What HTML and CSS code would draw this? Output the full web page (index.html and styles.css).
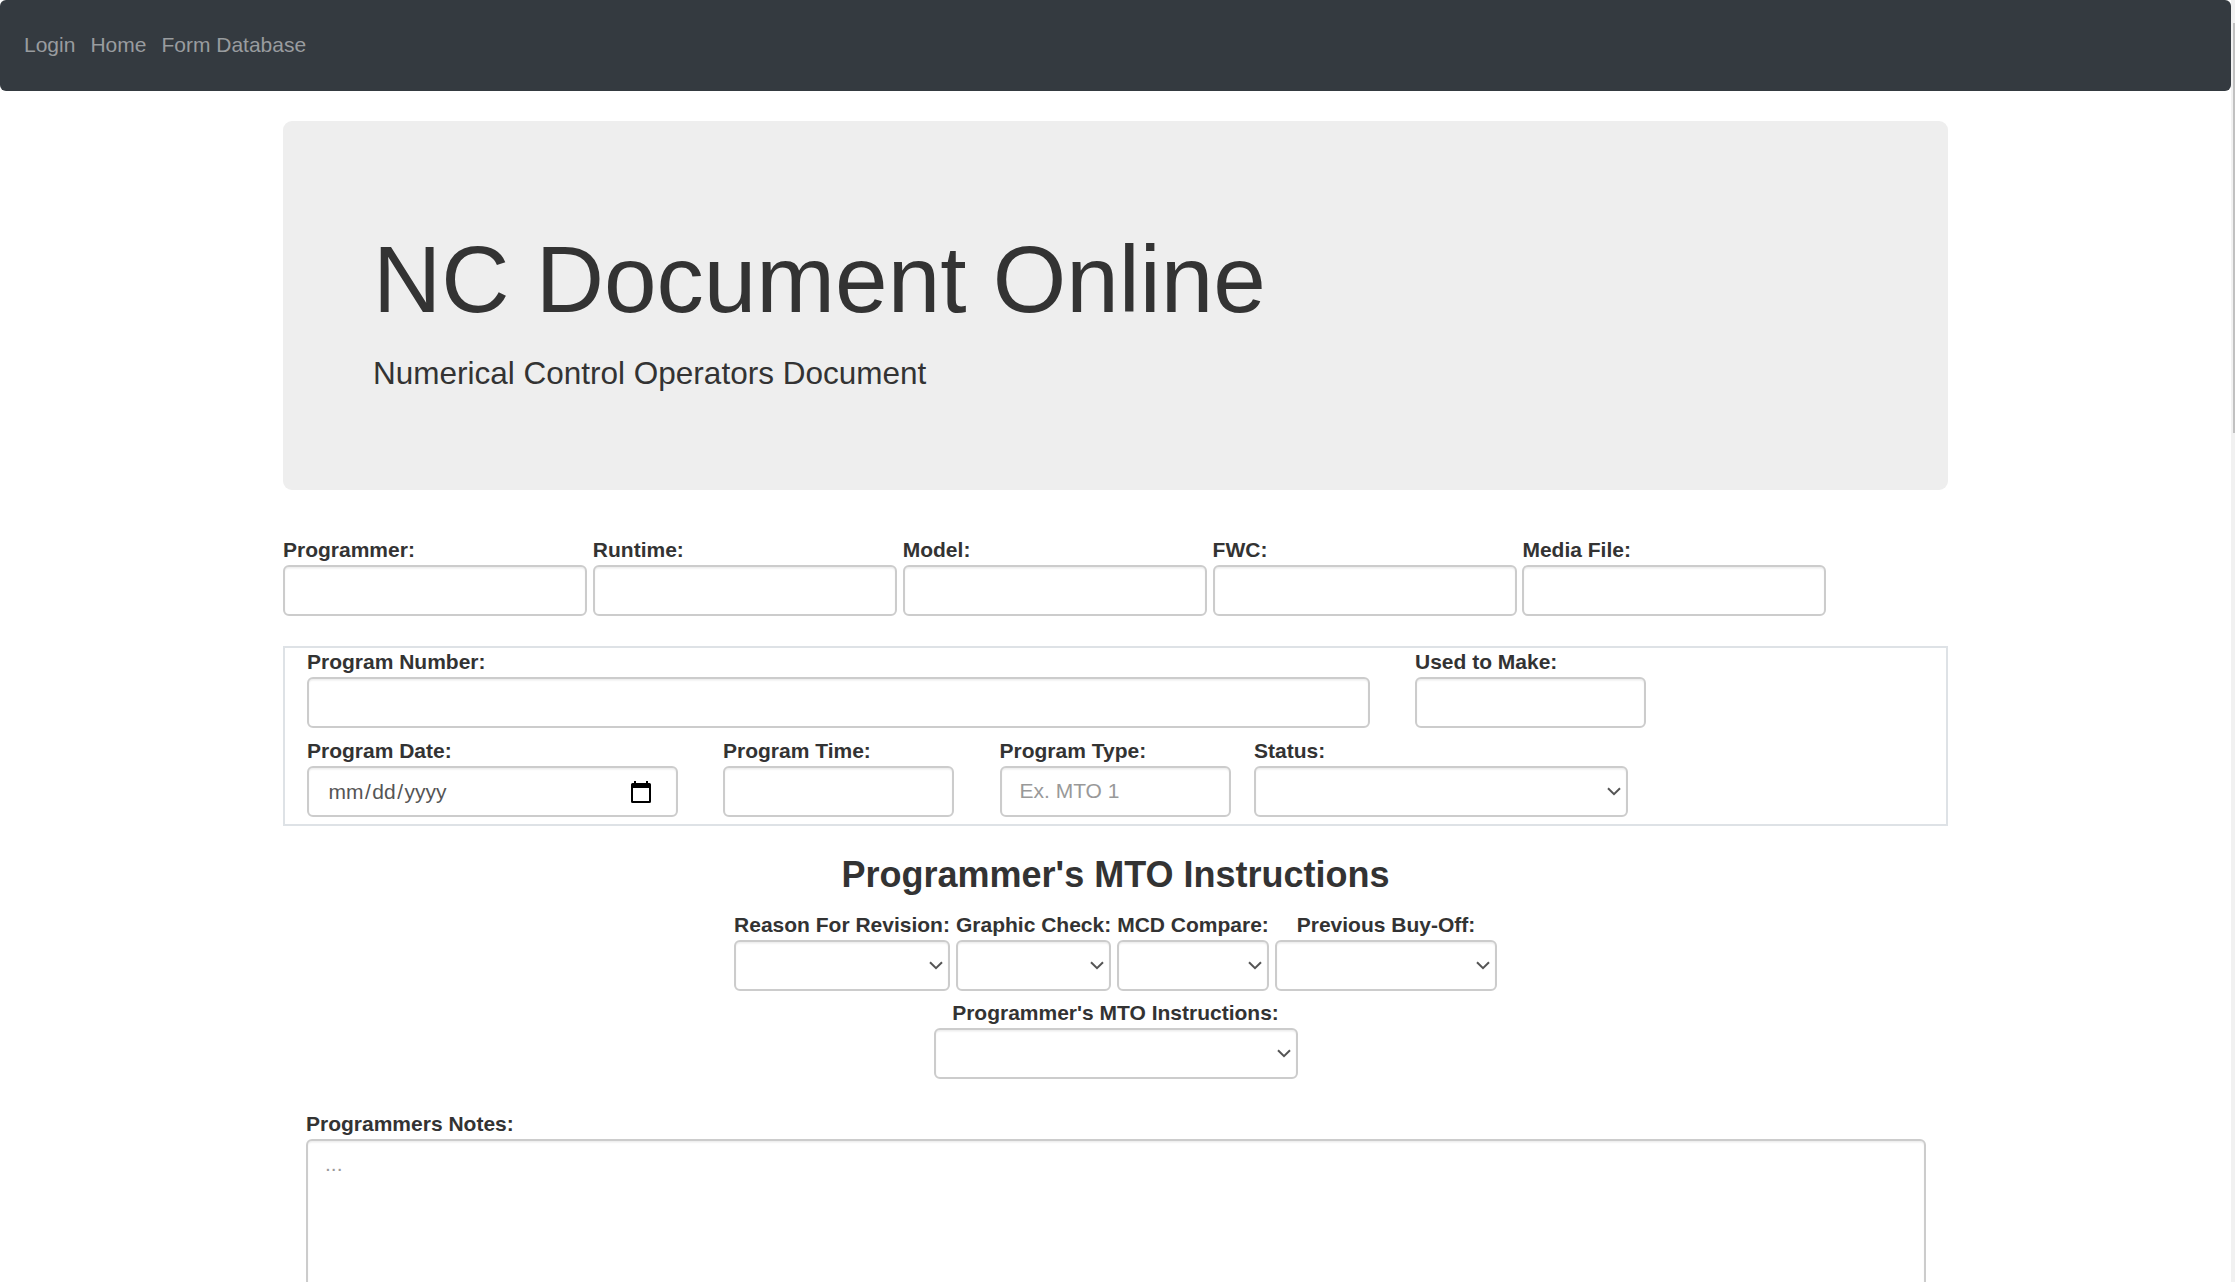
FILE: index.html
```html
<!DOCTYPE html>
<html lang="en">
<head>
<meta charset="utf-8">
<title>NC Document Online</title>
<link rel="stylesheet" href="styles.css">
</head>
<body>
<svg class="defs" aria-hidden="true">
  <symbol id="chevron" viewBox="0 0 14 9"><path d="M1 1.2 7 7.2 13 1.2" fill="none" stroke="#555" stroke-width="2"/></symbol>
</svg>
<div class="page">
  <nav class="navbar">
    <a href="#">Login</a>
    <a href="#">Home</a>
    <a href="#">Form Database</a>
  </nav>
  <main class="container">
    <header class="jumbotron">
      <h1>NC Document Online</h1>
      <p>Numerical Control Operators Document</p>
    </header>

    <div class="row general">
      <label class="field">Programmer:<input class="control" type="text"></label>
      <label class="field">Runtime:<input class="control" type="text"></label>
      <label class="field">Model:<input class="control" type="text"></label>
      <label class="field">FWC:<input class="control" type="text"></label>
      <label class="field">Media File:<input class="control" type="text"></label>
    </div>

    <section class="program">
      <div class="row">
        <label class="field number">Program Number:<input class="control" type="text"></label>
        <label class="field short">Used to Make:<input class="control" type="text"></label>
      </div>
      <div class="row">
        <div class="field date">Program Date:
          <div class="control picker">
            <span class="date-text"><span>mm</span>/<span>dd</span>/<span>yyyy</span></span>
            <svg class="calendar" viewBox="0 0 20 22"><path d="M3 0h2v2h10V0h2v2h1.500a1.500 1.500 0 0 1 1.500 1.500V20.500a1.500 1.500 0 0 1-1.500 1.500H1.500A1.500 1.500 0 0 1 0 20.500V3.500A1.500 1.500 0 0 1 1.500 2H3zM2 7v13h16V7z" fill="#000"/></svg>
          </div>
        </div>
        <label class="field short">Program Time:<input class="control" type="text"></label>
        <label class="field short">Program Type:<input class="control" type="text" placeholder="Ex. MTO 1"></label>
        <div class="field status">Status:<div class="control select"><svg class="chevron"><use href="#chevron"/></svg></div></div>
      </div>
    </section>

    <section class="mto">
      <h2>Programmer's MTO Instructions</h2>
      <div class="row">
        <div class="field reason">Reason For Revision:<div class="control select"><svg class="chevron"><use href="#chevron"/></svg></div></div>
        <div class="field graphic">Graphic Check:<div class="control select"><svg class="chevron"><use href="#chevron"/></svg></div></div>
        <div class="field mcd">MCD Compare:<div class="control select"><svg class="chevron"><use href="#chevron"/></svg></div></div>
        <div class="field buyoff">Previous Buy-Off:<div class="control select"><svg class="chevron"><use href="#chevron"/></svg></div></div>
      </div>
      <div class="row">
        <div class="field instructions">Programmer's MTO Instructions:<div class="control select"><svg class="chevron"><use href="#chevron"/></svg></div></div>
      </div>
    </section>

    <label class="field notes">Programmers Notes:<textarea class="control" placeholder="..."></textarea></label>
  </main>
</div>
<div class="scrollbar"><div class="thumb"></div></div>
</body>
</html>
```
FILE: styles.css
```css
* { box-sizing: border-box; }

body {
  display: flex;
  height: 1282px;
  margin: 0;
  overflow: hidden;
  background: #fff;
  color: #333;
  font: 21px/30px "Liberation Sans", Arial, sans-serif;
}

.defs { position: absolute; width: 0; height: 0; }

.page { flex: 1; height: 1282px; overflow: hidden; }

.navbar {
  display: flex;
  gap: 15px;
  height: 91px;
  padding: 30px 24px;
  border-radius: 6px;
  background: #343a40;
}

.navbar a { color: #999c9f; text-decoration: none; }

.container { width: 1665px; margin: 30px auto 0; }

.jumbotron {
  height: 369px;
  padding: 106px 90px 0;
  border-radius: 9px;
  background: #eee;
}

.jumbotron h1 {
  margin: 0 0 20px;
  font-size: 94.5px;
  font-weight: 400;
  line-height: 104px;
}

.jumbotron p { margin: 0; font-size: 31.5px; line-height: 45px; }

.row { display: flex; }

.field { display: block; font-weight: 700; }

.control {
  display: block;
  width: 100%;
  height: 51px;
  margin: 0;
  padding: 8px 18px 10px;
  border: 2px solid #ccc;
  border-radius: 6px;
  outline: 0;
  background: #fff;
  box-shadow: inset 0 1.5px 1.5px rgba(0, 0, 0, .075);
  color: #555;
  font: 400 21px/30px "Liberation Sans", Arial, sans-serif;
}

.control::placeholder { color: #999; opacity: 1; }

.general { gap: 5.86px; margin-top: 45px; }
.general .field { width: 304px; }

.program {
  display: flex;
  flex-direction: column;
  gap: 8px;
  height: 180px;
  margin-top: 30px;
  padding: 0 22px;
  border: 2px solid #dee2e6;
}

.program .row:first-child { margin-top: -1px; }
.number { width: 1063px; margin-right: 45px; }
.short { width: 231px; margin-right: 45.5px; }
.date { width: 371px; margin-right: 45px; }
.status { width: 373.5px; margin-left: -22px; }

.picker {
  display: flex;
  align-items: center;
  justify-content: space-between;
  padding: 0 25px 0 18px;
}

.date-text span { padding: 0 1.5px; }
.calendar { width: 20px; height: 22px; }

.select {
  display: flex;
  align-items: center;
  justify-content: flex-end;
  padding: 0 5px 0 18px;
}

.chevron { width: 14px; height: 9px; }

.mto { text-align: center; }
.mto h2 { margin: 29px 0 15px; font-size: 36px; line-height: 40px; }
.mto .row { justify-content: center; gap: 6px; margin-bottom: 7px; }
.reason { width: 216px; white-space: nowrap; }
.graphic { width: 155px; white-space: nowrap; }
.mcd { width: 152px; white-space: nowrap; }
.buyoff { width: 222px; }
.instructions { width: 364px; }

.notes { margin: 30px 22px 0 23px; }
.notes .control { height: 240px; padding-left: 17px; resize: none; }

.scrollbar { width: 4px; padding: 23px 0 0 2px; background: #f1f1f1; }
.thumb { height: 410px; background: #c1c1c1; }
```
